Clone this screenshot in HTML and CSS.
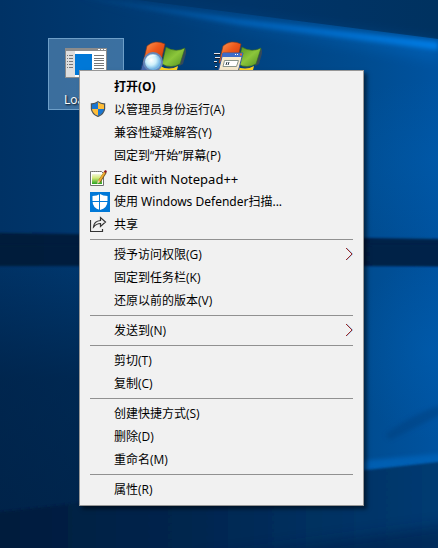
FILE: index.html
```html
<!DOCTYPE html>
<html lang="zh-CN">
<head>
<meta charset="utf-8">
<meta name="viewport" content="width=device-width, initial-scale=1">
<title>桌面</title>
<link rel="stylesheet" href="styles.css">
</head>
<body>
<main class="desktop">
  <svg class="wallpaper" viewBox="0 0 438 548" preserveAspectRatio="none" aria-hidden="true">
    <defs>
      <linearGradient id="base" x1="0" y1="0" x2="1" y2="0">
        <stop offset="0" stop-color="#003265"/><stop offset=".4" stop-color="#003d77"/><stop offset=".83" stop-color="#004c90"/><stop offset="1" stop-color="#0053a0"/>
      </linearGradient>
      <linearGradient id="sky" x1="0" y1="0" x2="1" y2="0">
        <stop offset="0" stop-color="#003466"/><stop offset=".5" stop-color="#003468"/><stop offset="1" stop-color="#003260"/>
      </linearGradient>
      <linearGradient id="beam" x1="0" y1="0" x2="1" y2="0">
        <stop offset="0" stop-color="#0057a4" stop-opacity=".2"/><stop offset=".5" stop-color="#0066c0" stop-opacity=".8"/><stop offset="1" stop-color="#007ce4"/>
      </linearGradient>
      <linearGradient id="fall" x1="0" y1="0" x2="0" y2="1">
        <stop offset="0" stop-color="#001c3c" stop-opacity="0"/><stop offset=".4" stop-color="#001c3c" stop-opacity=".55"/><stop offset="1" stop-color="#001c3c" stop-opacity=".7"/>
      </linearGradient>
      <linearGradient id="band" x1="0" y1="0" x2="1" y2="0">
        <stop offset="0" stop-color="#001a3a"/><stop offset="1" stop-color="#002149"/>
      </linearGradient>
      <linearGradient id="floor" x1="0" y1="0" x2="1" y2="0">
        <stop offset="0" stop-color="#001c3c"/><stop offset=".45" stop-color="#00264f"/><stop offset="1" stop-color="#003c74"/>
      </linearGradient>
      <radialGradient id="glow"><stop offset="0" stop-color="#006ac4" stop-opacity=".65"/><stop offset="1" stop-color="#006ac4" stop-opacity="0"/></radialGradient>
      <filter id="edge" x="-10%" y="-40%" width="120%" height="180%"><feGaussianBlur stdDeviation="1"/></filter>
      <filter id="soft" x="-10%" y="-40%" width="120%" height="180%"><feGaussianBlur stdDeviation="2"/></filter>
      <filter id="haze" x="-20%" y="-60%" width="140%" height="220%"><feGaussianBlur stdDeviation="7"/></filter>
    </defs>
    <rect width="438" height="548" fill="url(#base)"/>
    <rect y="265" width="300" height="283" fill="url(#fall)"/>
    <ellipse cx="438" cy="160" rx="150" ry="80" fill="url(#glow)" opacity=".3"/>
    <ellipse cx="430" cy="350" rx="80" ry="90" fill="url(#glow)" opacity=".4"/>
    <path d="M60 -10 438 39V-10z" fill="url(#sky)"/>
    <path d="M60 -8 438 43V60L250 30z" fill="url(#beam)" opacity=".3" filter="url(#haze)"/>
    <path d="M60 -6 240 19 438 42V50L240 25z" fill="url(#beam)" filter="url(#soft)"/>
    <path d="M-10 233 448 239V266L-10 255z" fill="url(#band)" filter="url(#edge)"/>
    <path d="M-10 245H448V266H-10z" fill="url(#band)" filter="url(#edge)"/>
    <path d="M385 435Q405 418 440 405V415L390 440z" fill="#00407f" opacity=".5" filter="url(#soft)"/>
    <path d="M350 462 448 453V464L350 473z" fill="#0064ba" opacity=".8" filter="url(#soft)"/>
    <path d="M-10 513 448 461V560H-10z" fill="url(#floor)" filter="url(#edge)"/>
    <path d="M190 560 448 525V560z" fill="#001f45" opacity=".5" filter="url(#haze)"/>
  </svg>

  <div class="icons">
    <div class="tile selected">
      <svg class="tile-icon" viewBox="0 0 48 48" aria-hidden="true">
        <path fill="#fff" stroke="#8c8c8c" d="M3.500 8.500h41v29h-41z"/>
        <path fill="#8c8c8c" d="M3 8h42v3H3z"/>
        <path fill="#fff" d="M36 9h2v1h-2zm3 0h2v1h-2zm3 0h2v1h-2z"/>
        <path fill="#dedede" d="M4 11h9v26H4z"/>
        <path fill="#0078d7" d="M13 14h17v21H13z"/>
        <path stroke="#777" d="M5 15.500h1m1 0h4M5 18.500h1m1 0h4M5 21.500h1m1 0h4M5 24.500h1m1 0h4M5 27.500h1m1 0h4M32 15.500h10M32 18.500h10M32 20.500h10M32 23.500h10M32 25.500h10M32 28.500h10M32 30.500h10"/>
      </svg>
      <span class="tile-label">Loa</span>
    </div>
    <div class="tile">
      <svg class="tile-icon" viewBox="0 0 48 48" aria-hidden="true">
        <defs>
          <linearGradient id="red" x1="0" y1="0" x2="1" y2="1"><stop offset="0" stop-color="#ffa05a"/><stop offset=".45" stop-color="#ee5a1c"/><stop offset="1" stop-color="#c83109"/></linearGradient>
          <linearGradient id="green" x1="0" y1="0" x2="1" y2="1"><stop offset="0" stop-color="#4e8e1d"/><stop offset=".5" stop-color="#8cc63b"/><stop offset="1" stop-color="#4f8f20"/></linearGradient>
          <radialGradient id="lens" cx=".4" cy=".4"><stop offset="0" stop-color="#fff"/><stop offset=".55" stop-color="#cdf0fb"/><stop offset="1" stop-color="#74b6e5"/></radialGradient>
        </defs>
        <path fill="#34495b" d="M27 25q10 5 18-1l4-14-2-1-6 17q-7 4-14 0z"/>
        <path fill="url(#red)" stroke="#833616" stroke-width=".6" d="M9 6q8-7 18-2l-4 18q-9-3-18 1z"/>
        <path fill="url(#green)" stroke="#3c681e" stroke-width=".6" d="M28 7q9 6 19 1l-5 16q-9 5-18 0z"/>
        <path fill="#ffd120" d="M22 26q9 5 18 0l-4 16q-9 5-18 0z"/>
        <path fill="#4568ae" stroke="#233e74" d="M5 22 1 36h8l3-8z"/>
        <circle cx="15" cy="22" r="9" fill="url(#lens)" stroke="#6786b6" stroke-width="2"/>
        <path fill="#fff" opacity=".8" d="M8 20q3-7 11-4-8 0-11 4z"/>
      </svg>
    </div>
    <div class="tile">
      <svg class="tile-icon" viewBox="0 0 48 48" aria-hidden="true">
        <path fill="#34495b" d="M27 25q10 5 18-1l4-14-2-1-6 17q-7 4-14 0z"/>
        <path fill="url(#red)" stroke="#833616" stroke-width=".6" d="M9 6q8-7 18-2l-4 18q-9-3-18 1z"/>
        <path fill="url(#green)" stroke="#3c681e" stroke-width=".6" d="M28 7q9 6 19 1l-5 16q-9 5-18 0z"/>
        <path fill="#ffd120" d="M22 26q9 5 18 0l-4 16q-9 5-18 0z"/>
        <path fill="#f6e9cc" stroke="#385798" d="M9 13h20l-6 23H3z"/>
        <path fill="#3e6cc9" d="M9 13h20l-1 4H8z"/>
        <path stroke="#fff" d="M21 14.500h1m1 0h1"/><path stroke="#f05b2c" stroke-width="2" d="M26 14.500h2"/>
        <path fill="#fff" stroke="#89958b" d="M10.500 20.500h14l-2 6H9z"/>
        <path stroke="#293b42" d="m13 22-1 3m3-3-1 3" fill="none"/>
        <path stroke="#1b1f29" stroke-width="2" d="M0 14h6M1 18h5M0 22h3M1 27h2"/>
        <path stroke="#e3e7ef" d="M0 13.500h6M1 17.500h5M0 21.500h3M1 26.500h2"/>
      </svg>
    </div>
  </div>

  <menu class="context-menu">
    <li><button class="item default" type="button"><span class="text">打开(O)</span></button></li>
    <li><button class="item" type="button">
      <svg class="icon" viewBox="0 0 20 20" aria-hidden="true">
        <path fill="#1976d2" d="M8 2Q5 4 1.500 4v5H8z"/>
        <path fill="#ffbd38" d="M8 2q3 2 6.500 2v5H8z"/>
        <path fill="#ffbd38" d="M1.500 9H8v7Q2 14 1.500 9z"/>
        <path fill="#1976d2" d="M8 9h6.500Q14 14 8 16z"/>
        <path fill="none" stroke="#4b5357" stroke-width="1.200" d="M8 1.600Q5 4 1.400 3.800V9Q2 14 8 16.400 14 14 14.600 9V3.800Q11 4 8 1.600z"/>
      </svg><span class="text">以管理员身份运行(A)</span></button></li>
    <li><button class="item" type="button"><span class="text">兼容性疑难解答(Y)</span></button></li>
    <li><button class="item" type="button"><span class="text">固定到“开始”屏幕(P)</span></button></li>
    <li><button class="item program" type="button">
      <svg class="icon" viewBox="0 0 20 20" aria-hidden="true">
        <defs><linearGradient id="note" x1="0" y1="0" x2="0" y2="1"><stop offset="0" stop-color="#f2f6db"/><stop offset=".4" stop-color="#d4e978"/><stop offset="1" stop-color="#28a321"/></linearGradient></defs>
        <path fill="#fff" stroke="#707070" d="M.500 2.500h11l2 2v12H.500z"/>
        <path fill="url(#note)" d="M2 5h10v10H2z"/>
        <path stroke="#8c8c8c" stroke-dasharray="1 1" d="M1 2.500h11"/>
        <path stroke="#705320" stroke-width="3" d="M15.500 3 9 13"/>
        <path stroke="#efab2f" stroke-width="2" d="M15 3 9 12.500"/>
        <path fill="#ebd4a4" d="m8 11 2 2-3 2z"/>
        <path fill="#8c1620" d="m15 1 2 1-1 2-2-1z"/>
      </svg><span class="text">Edit with Notepad++</span></button></li>
    <li><button class="item wide" type="button">
      <svg class="icon" viewBox="0 0 20 20" aria-hidden="true">
        <path fill="#0078d7" d="M0 0h20v20H0z"/>
        <path fill="#fff" d="M10 2Q7 4 2.500 4v5q0 7 7.500 9 7.500-2 7.500-9V4Q13 4 10 2z"/>
        <path stroke="#0078d7" d="M9.500 1v18M2 9.500h16"/>
      </svg><span class="text">使用 Windows Defender扫描...</span></button></li>
    <li><button class="item wide" type="button">
      <svg class="icon" viewBox="0 0 20 20" aria-hidden="true">
        <path fill="none" stroke="#333" stroke-width="1.200" d="M.500 5v11.500h12V14M3.500 12Q4 6 10.500 5.500v-3L15.500 7l-5 4.500v-3Q6.500 8.500 3.500 12z"/>
      </svg><span class="text">共享</span></button></li>
    <li class="separator" role="separator"></li>
    <li><button class="item" type="button"><span class="text">授予访问权限(G)</span>
      <svg class="arrow" viewBox="0 0 8 14" aria-hidden="true"><path class="fringe" d="m1.500 0 6 6-6 6"/><path d="m1 0 6 6-6 6"/></svg></button></li>
    <li><button class="item" type="button"><span class="text">固定到任务栏(K)</span></button></li>
    <li><button class="item" type="button"><span class="text">还原以前的版本(V)</span></button></li>
    <li class="separator" role="separator"></li>
    <li><button class="item" type="button"><span class="text">发送到(N)</span>
      <svg class="arrow" viewBox="0 0 8 14" aria-hidden="true"><path class="fringe" d="m1.500 0 6 6-6 6"/><path d="m1 0 6 6-6 6"/></svg></button></li>
    <li class="separator" role="separator"></li>
    <li><button class="item" type="button"><span class="text">剪切(T)</span></button></li>
    <li><button class="item" type="button"><span class="text">复制(C)</span></button></li>
    <li class="separator" role="separator"></li>
    <li><button class="item" type="button"><span class="text">创建快捷方式(S)</span></button></li>
    <li><button class="item" type="button"><span class="text">删除(D)</span></button></li>
    <li><button class="item" type="button"><span class="text">重命名(M)</span></button></li>
    <li class="separator" role="separator"></li>
    <li><button class="item" type="button"><span class="text">属性(R)</span></button></li>
  </menu>
</main>
</body>
</html>
```
FILE: styles.css
```css
* {
  box-sizing: border-box;
}

body {
  margin: 0;
  font-family: "Open Sans", "Noto Sans CJK SC", sans-serif;
  font-size: 12px;
}

.desktop {
  position: relative;
  min-height: 100vh;
  overflow: hidden;
  background: #003a73;
}

.wallpaper {
  position: absolute;
  inset: 0;
  width: 100%;
  height: 100%;
}

.icons {
  position: relative;
  display: flex;
  padding: 38px 0 0 48px;
}

.tile {
  width: 76px;
  height: 72px;
  padding: 1px;
  border: 1px solid transparent;
}

.tile.selected {
  background: rgba(130, 180, 220, 0.45);
  border-color: #6e9fc8;
}

.tile-icon {
  display: block;
  width: 48px;
  height: 48px;
  margin: 0 auto;
}

.tile-label {
  display: block;
  padding-left: 14px;
  line-height: 24px;
  color: #fff;
  text-shadow: 1px 1px 2px #000;
}

.context-menu {
  position: absolute;
  top: 70px;
  left: 79px;
  width: 285px;
  margin: 0;
  padding: 4px 0;
  list-style: none;
  background: #f1f1f1;
  border: 1px solid #979797;
  box-shadow: 3px 3px 4px rgba(0, 0, 0, 0.5);
}

.item {
  display: grid;
  grid-template-columns: 20px 1fr 8px;
  column-gap: 4px;
  align-items: center;
  width: 100%;
  height: 23px;
  padding: 0 10px;
  border: 0;
  background: none;
  color: #000;
  font: inherit;
  text-align: left;
  white-space: nowrap;
}

.item:hover {
  background: #fff;
}

.default {
  font-weight: 700;
}

.wide,
.program {
  font-family: "Noto Sans", "Noto Sans CJK SC", sans-serif;
}

.program {
  font-size: 13px;
}

.icon {
  grid-column: 1;
  grid-row: 1;
  width: 20px;
  height: 20px;
}

.text {
  grid-column: 2;
  grid-row: 1;
  line-height: 20px;
}

.arrow {
  grid-column: 3;
  grid-row: 1;
  width: 8px;
  height: 14px;
  fill: none;
  stroke: #a02420;
}

.fringe {
  stroke: #65aee8;
}

.separator {
  height: 7px;
  margin: 0 10px;
  padding: 3px 0;
  background: #919191 content-box;
}
```
